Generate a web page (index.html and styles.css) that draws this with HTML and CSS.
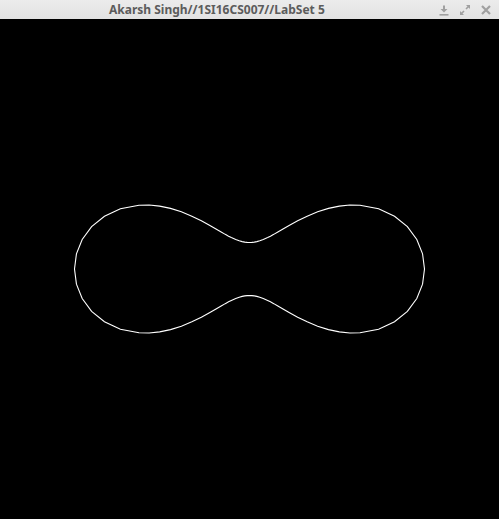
FILE: index.html
```html
<!DOCTYPE html>
<html>
<head>
<meta charset="utf-8">
<link rel="stylesheet" href="styles.css">
</head>
<body>
<div class="window">
  <div class="titlebar">
    <div class="title">Akarsh Singh//1SI16CS007//LabSet 5</div>
    <div class="buttons">
      <svg class="btn" width="12" height="12" viewBox="0 0 12 12">
        <path d="M6 1.5 V7" stroke="#a0a0a0" stroke-width="2" fill="none"/>
        <path d="M2.5 5 L6 8.5 L9.5 5 Z" fill="#a0a0a0"/>
        <rect x="1.5" y="10" width="9" height="1.6" fill="#a0a0a0"/>
      </svg>
      <svg class="btn" width="12" height="12" viewBox="0 0 12 12">
        <path d="M7 1 H11 V5 Z" fill="#a0a0a0"/>
        <path d="M9.5 2.5 L7 5" stroke="#a0a0a0" stroke-width="1.6"/>
        <path d="M1 7 V11 H5 Z" fill="#a0a0a0"/>
        <path d="M2.5 9.5 L5 7" stroke="#a0a0a0" stroke-width="1.6"/>
      </svg>
      <svg class="btn" width="12" height="12" viewBox="0 0 12 12">
        <path d="M2 2 L10 10 M10 2 L2 10" stroke="#a0a0a0" stroke-width="2.2" fill="none"/>
      </svg>
    </div>
  </div>
  <div class="canvas">
    <svg class="curve" width="499" height="500" viewBox="-249.5 -250 499 500">
      <polygon fill="none" stroke="#ffffff" stroke-width="1.1"
        points="175,0 173.06,-15.14 167.31,-29.5 157.89,-42.31 145.04,-52.79 129.1,-60.2 110.51,-63.8 100.37,-63.94 89.82,-62.89 78.99,-60.61 68.14,-57.18 57.68,-52.85 48.15,-48.15 40.04,-43.7 33.5,-39.93 28.35,-36.95 24.26,-34.64 20.93,-32.86 18.17,-31.47 13.76,-29.5 10.28,-28.23 7.34,-27.4 4.74,-26.87 2.33,-26.59 0,-26.5 -2.33,-26.59 -4.74,-26.87 -7.34,-27.4 -10.28,-28.23 -13.76,-29.5 -18.17,-31.47 -20.93,-32.86 -24.26,-34.64 -28.35,-36.95 -33.5,-39.93 -40.04,-43.7 -48.15,-48.15 -57.68,-52.85 -68.14,-57.18 -78.99,-60.61 -89.82,-62.89 -100.37,-63.94 -110.51,-63.8 -129.1,-60.2 -145.04,-52.79 -157.89,-42.31 -167.31,-29.5 -173.06,-15.14 -175,0 -173.06,15.14 -167.31,29.5 -157.89,42.31 -145.04,52.79 -129.1,60.2 -110.51,63.8 -100.37,63.94 -89.82,62.89 -78.99,60.61 -68.14,57.18 -57.68,52.85 -48.15,48.15 -40.04,43.7 -33.5,39.93 -28.35,36.95 -24.26,34.64 -20.93,32.86 -18.17,31.47 -13.76,29.5 -10.28,28.23 -7.34,27.4 -4.74,26.87 -2.33,26.59 0,26.5 2.33,26.59 4.74,26.87 7.34,27.4 10.28,28.23 13.76,29.5 18.17,31.47 20.93,32.86 24.26,34.64 28.35,36.95 33.5,39.93 40.04,43.7 48.15,48.15 57.68,52.85 68.14,57.18 78.99,60.61 89.82,62.89 100.37,63.94 110.51,63.8 129.1,60.2 145.04,52.79 157.89,42.31 167.31,29.5 173.06,15.14"/>
    </svg>
  </div>
</div>
</body>
</html>
```

FILE: styles.css
```css
html, body {
  margin: 0;
  padding: 0;
  background: #000;
  overflow: hidden;
}
.window {
  width: 499px;
  height: 519px;
  display: flex;
  flex-direction: column;
}
.titlebar {
  height: 19px;
  background: linear-gradient(#ececec, #e2e2e2);
  display: flex;
  align-items: center;
}
.title {
  flex: 1;
  padding-left: 109px;
  font-family: "Noto Sans", "Open Sans", sans-serif;
  font-weight: bold;
  font-size: 12px;
  color: #5c5c5c;
  line-height: 19px;
  white-space: nowrap;
}
.buttons {
  display: flex;
  gap: 9px;
  padding-right: 7px;
  align-items: center;
}
.btn {
  display: block;
}
.canvas {
  height: 500px;
  background: #000;
}
.curve {
  display: block;
}
```
